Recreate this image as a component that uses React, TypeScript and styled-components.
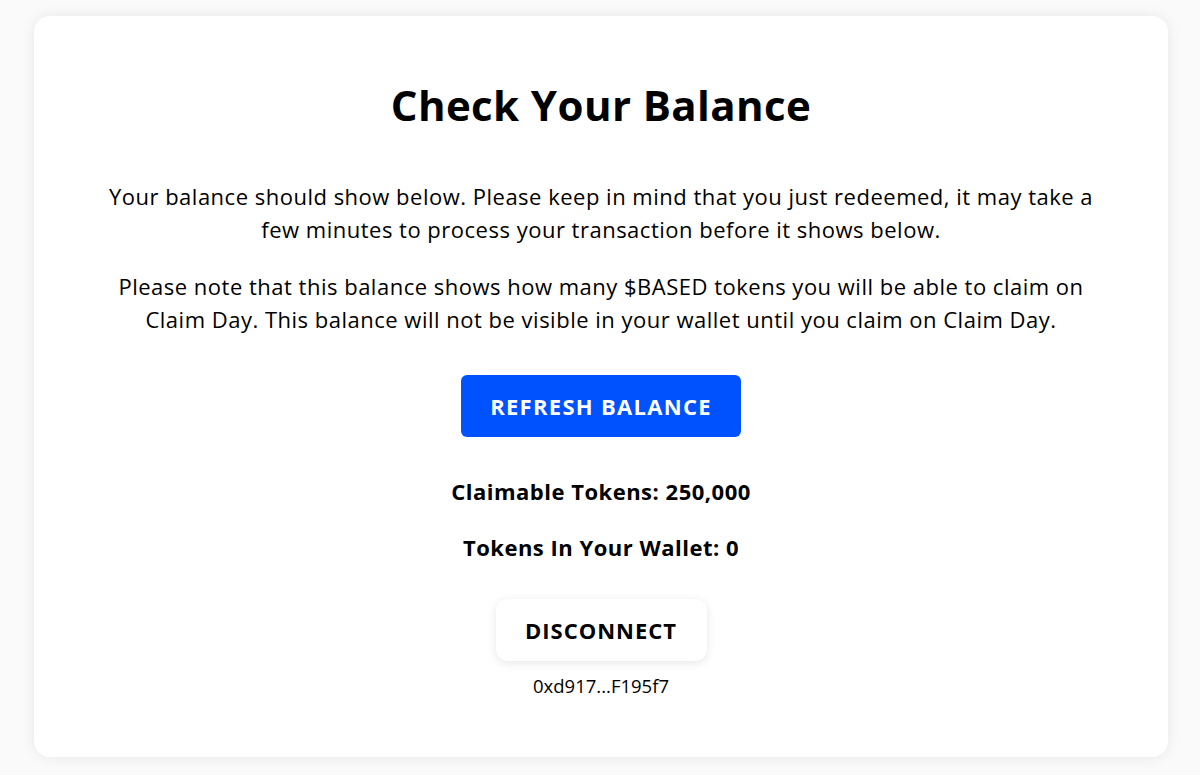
import React from 'react';
import styled, { createGlobalStyle } from 'styled-components';

const GlobalStyle = createGlobalStyle`
  html, body {
    margin: 0;
    padding: 0;
    background: #ffffff;
    font-family: "Open Sans", "Noto Sans", Arial, sans-serif;
    color: #000;
  }
  * {
    box-sizing: border-box;
  }
`;

const Page = styled.div`
  width: 1200px;
  height: 775px;
  padding: 16px 32px 18px 34px;
  background: #fafafa;
`;

const Card = styled.div`
  height: 100%;
  background: #ffffff;
  border-radius: 16px;
  box-shadow: 0 0 14px rgba(0, 0, 0, 0.08);
  display: flex;
  flex-direction: column;
  align-items: center;
  padding: 61px 40px 0;
`;

const Title = styled.h1`
  margin: 0 0 47px;
  font-size: 42px;
  font-weight: 700;
  line-height: 56px;
  letter-spacing: 0.4px;
`;

const Paragraph = styled.p`
  margin: 0 0 24px;
  max-width: 1010px;
  font-size: 22px;
  line-height: 33px;
  letter-spacing: 0.5px;
  text-align: center;
  font-weight: 400;
`;

const Button = styled.button<{ variant: 'primary' | 'plain' }>`
  border: none;
  cursor: pointer;
  font-family: inherit;
  font-size: 22px;
  font-weight: 700;
  height: 62px;
  padding: 0;
  width: ${(p) => (p.variant === 'primary' ? '280px' : '211px')};
  letter-spacing: ${(p) => (p.variant === 'primary' ? '1.3px' : '1px')};
  color: ${(p) => (p.variant === 'primary' ? '#ffffff' : '#000000')};
  background: ${(p) => (p.variant === 'primary' ? '#0052ff' : '#ffffff')};
  border-radius: ${(p) => (p.variant === 'primary' ? '6px' : '12px')};
  box-shadow: ${(p) => (p.variant === 'primary' ? 'none' : '0 2px 10px rgba(0, 0, 0, 0.1)')};
`;

const Stat = styled.div`
  font-size: 22px;
  font-weight: 700;
  line-height: 30px;
  letter-spacing: 0.5px;
  margin-top: 26px;
`;

const Address = styled.div`
  margin-top: 12px;
  font-size: 18.5px;
`;

export default function App() {
  return (
    <>
      <GlobalStyle />
      <Page>
        <Card>
          <Title>Check Your Balance</Title>
          <Paragraph>
            Your balance should show below. Please keep in mind that you just redeemed, it may take a few minutes to
            process your transaction before it shows below.
          </Paragraph>
          <Paragraph>
            Please note that this balance shows how many $BASED tokens you will be able to claim on Claim Day. This
            balance will not be visible in your wallet until you claim on Claim Day.
          </Paragraph>
          <Button variant="primary" style={{ marginTop: 15 }}>
            REFRESH BALANCE
          </Button>
          <Stat style={{ marginTop: 39 }}>Claimable Tokens: 250,000</Stat>
          <Stat>Tokens In Your Wallet: 0</Stat>
          <Button variant="plain" style={{ marginTop: 37 }}>
            DISCONNECT
          </Button>
          <Address>0xd917...F195f7</Address>
        </Card>
      </Page>
    </>
  );
}
